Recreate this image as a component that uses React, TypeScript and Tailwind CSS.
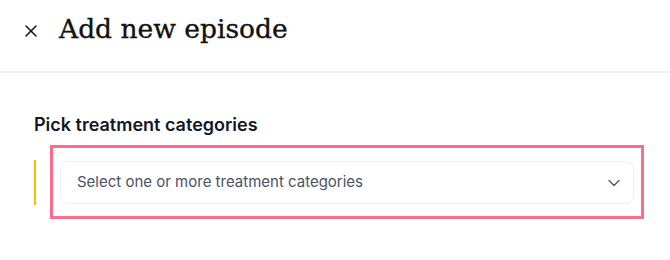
import { X, ChevronDown } from "lucide-react";

export default function App() {
  return (
    <div className="w-[670px] h-[260px] bg-white" style={{ fontFamily: "Inter, 'Noto Sans', sans-serif" }}>
      {/* Header */}
      <div className="h-[73px] border-b-2 border-[#eef1f5] flex items-start pt-[13px] pl-[21px] gap-[18px]">
        <X size={20} strokeWidth={1.75} className="mt-[8px] text-[#111]" />
        <h1 className="text-[26.5px] leading-[32px] text-[#111] font-['DejaVu_Serif',serif] [-webkit-text-stroke:0.35px_#111]">
          Add new episode
        </h1>
      </div>

      {/* Body */}
      <div className="pl-[34px] pt-[40px]">
        <label className="block text-[18px] leading-[24px] font-semibold text-[#111827]">
          Pick treatment categories
        </label>
        <div className="flex items-center mt-[8px]">
          <div className="w-[2px] h-[45px] bg-[#fbbc05]" />
          <div className="ml-[14px] w-[594px] border-[3px] border-[#ff6b8b] px-[7px] pt-[13px] pb-[12px]">
            <button className="w-full h-[43px] flex items-center justify-between rounded-lg border border-[#eef0f4] bg-white pl-[16px] pr-[9px]">
              <span className="text-[15px] text-[#4b5166]">Select one or more treatment categories</span>
              <ChevronDown size={20} strokeWidth={1.5} className="text-[#4b5166]" />
            </button>
          </div>
        </div>
      </div>
    </div>
  );
}
